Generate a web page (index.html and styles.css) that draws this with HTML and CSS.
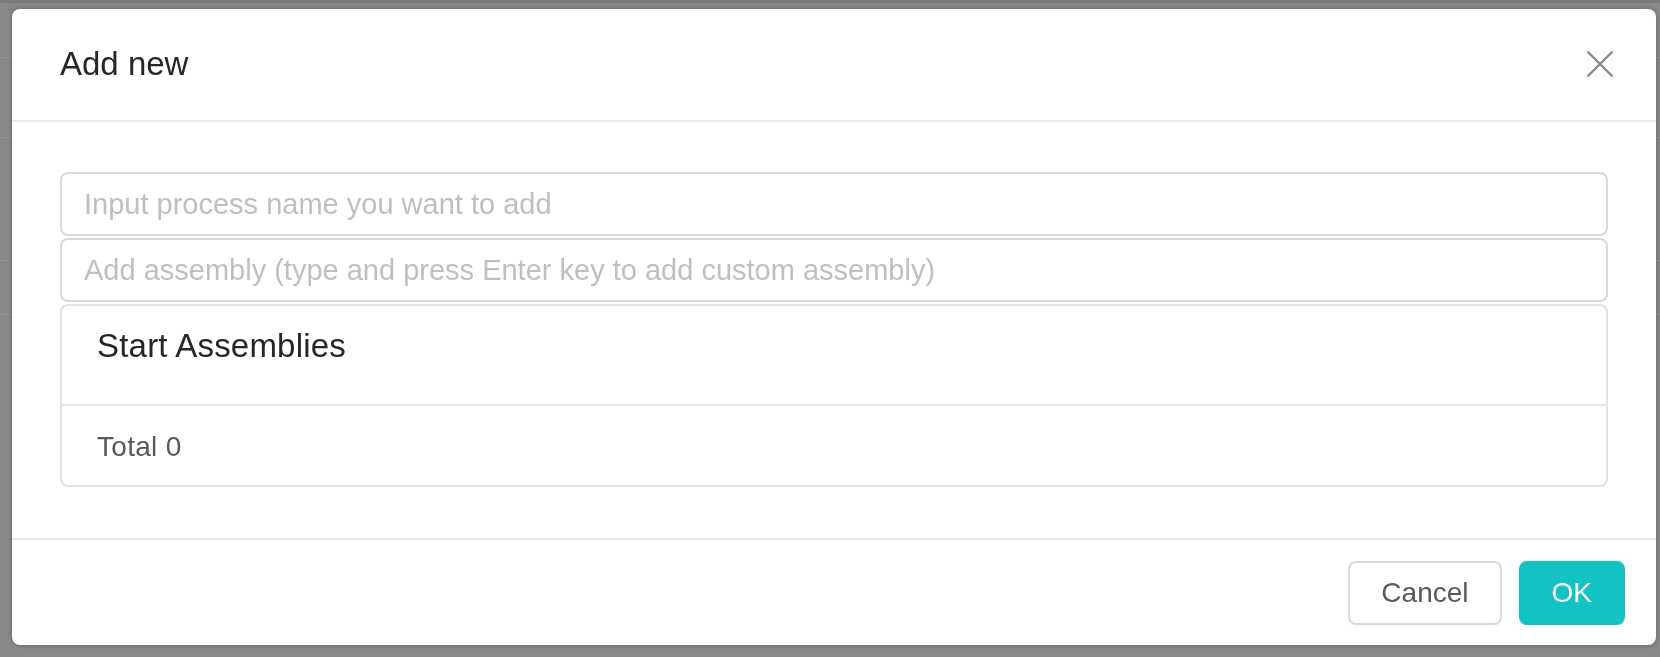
FILE: index.html
```html
<!DOCTYPE html>
<html lang="en">
<head>
<meta charset="utf-8">
<title>Add new</title>
<link rel="stylesheet" href="styles.css">
</head>
<body>
<div class="page">
  <div class="page-top"></div>
  <div class="page-row r1"></div>
  <div class="page-row r2"></div>
  <div class="page-row r3"></div>
  <div class="page-row r4"></div>
</div>
<div class="mask">
  <div class="modal">
    <div class="modal-header">
      <div class="modal-title">Add new</div>
      <button class="modal-close" aria-label="Close">
        <svg width="28" height="28" viewBox="0 0 28 28"><path d="M1.5 1.5 L26.5 26.5 M26.5 1.5 L1.5 26.5" stroke="#8a8a8a" stroke-width="2.4" fill="none"/></svg>
      </button>
    </div>
    <div class="modal-body">
      <input class="field" type="text" placeholder="Input process name you want to add">
      <input class="field" type="text" placeholder="Add assembly (type and press Enter key to add custom assembly)">
      <div class="list-card">
        <div class="list-head">Start Assemblies</div>
        <div class="list-foot">Total 0</div>
      </div>
    </div>
    <div class="modal-footer">
      <button class="btn btn-default">Cancel</button>
      <button class="btn btn-primary">OK</button>
    </div>
  </div>
</div>
</body>
</html>
```

FILE: styles.css
```css
* { box-sizing: border-box; }

html, body {
  margin: 0;
  padding: 0;
  width: 1660px;
  height: 657px;
  overflow: hidden;
}

body {
  background: #888888;
  font-family: "Liberation Sans", Arial, sans-serif;
  color: #262626;
}

.page {
  display: flex;
  flex-direction: column;
  height: 657px;
}

.page-top {
  height: 3px;
  background: #7b7b7b;
}

.page-row {
  border-bottom: 1px solid #939393;
}
.r1 { height: 55px; }
.r2 { height: 80px; }
.r3 { height: 123px; }
.r4 { height: 54px; }

.mask {
  position: fixed;
  inset: 0;
  padding: 9px 4px 12px 12px;
}

.modal {
  width: 1644px;
  background: #ffffff;
  border-radius: 8px;
  box-shadow: 0 0 4px 1px rgba(0, 0, 0, 0.18);
  display: flex;
  flex-direction: column;
}

.modal-header {
  height: 113px;
  padding: 0 42px 2px 48px;
  border-bottom: 2px solid #e8e8e8;
  display: flex;
  align-items: center;
  justify-content: space-between;
}

.modal-title {
  font-size: 33px;
  line-height: 44px;
  color: #262626;
}

.modal-close {
  border: 0;
  background: transparent;
  padding: 0;
  width: 28px;
  height: 28px;
  display: flex;
  cursor: pointer;
}

.modal-body {
  padding: 50px 48px 51px 48px;
  display: flex;
  flex-direction: column;
  gap: 2px;
}

.field {
  display: block;
  width: 100%;
  height: 64px;
  margin: 0;
  padding: 0 22px;
  border: 2px solid #d9d9d9;
  border-radius: 8px;
  font-family: "Liberation Sans", Arial, sans-serif;
  font-size: 29px;
  color: #262626;
  background: #ffffff;
  outline: none;
}

.field::placeholder {
  color: #bfbfbf;
}

.list-card {
  border: 2px solid #e2e2e2;
  border-radius: 8px;
  display: flex;
  flex-direction: column;
}

.list-head {
  height: 100px;
  padding: 18px 34px 0 35px;
  border-bottom: 2px solid #e8e8e8;
  font-size: 33px;
  line-height: 44px;
  letter-spacing: 0.2px;
  color: #262626;
}

.list-foot {
  height: 79px;
  padding: 2px 34px 0 35px;
  display: flex;
  align-items: center;
  font-size: 28px;
  letter-spacing: 0.3px;
  color: #595959;
}

.modal-footer {
  border-top: 2px solid #e8e8e8;
  height: 107px;
  padding: 21px 31px 20px 32px;
  display: flex;
  justify-content: flex-end;
  gap: 17px;
}

.btn {
  height: 64px;
  padding: 0 31px;
  border-radius: 8px;
  border: 2px solid #d9d9d9;
  font-family: "Liberation Sans", Arial, sans-serif;
  font-size: 28px;
  cursor: pointer;
  box-shadow: 0 2px 0 rgba(0, 0, 0, 0.015);
}

.btn-default {
  background: #ffffff;
  color: #595959;
}

.btn-primary {
  background: #13c2c2;
  border-color: #13c2c2;
  color: #ffffff;
}
```
